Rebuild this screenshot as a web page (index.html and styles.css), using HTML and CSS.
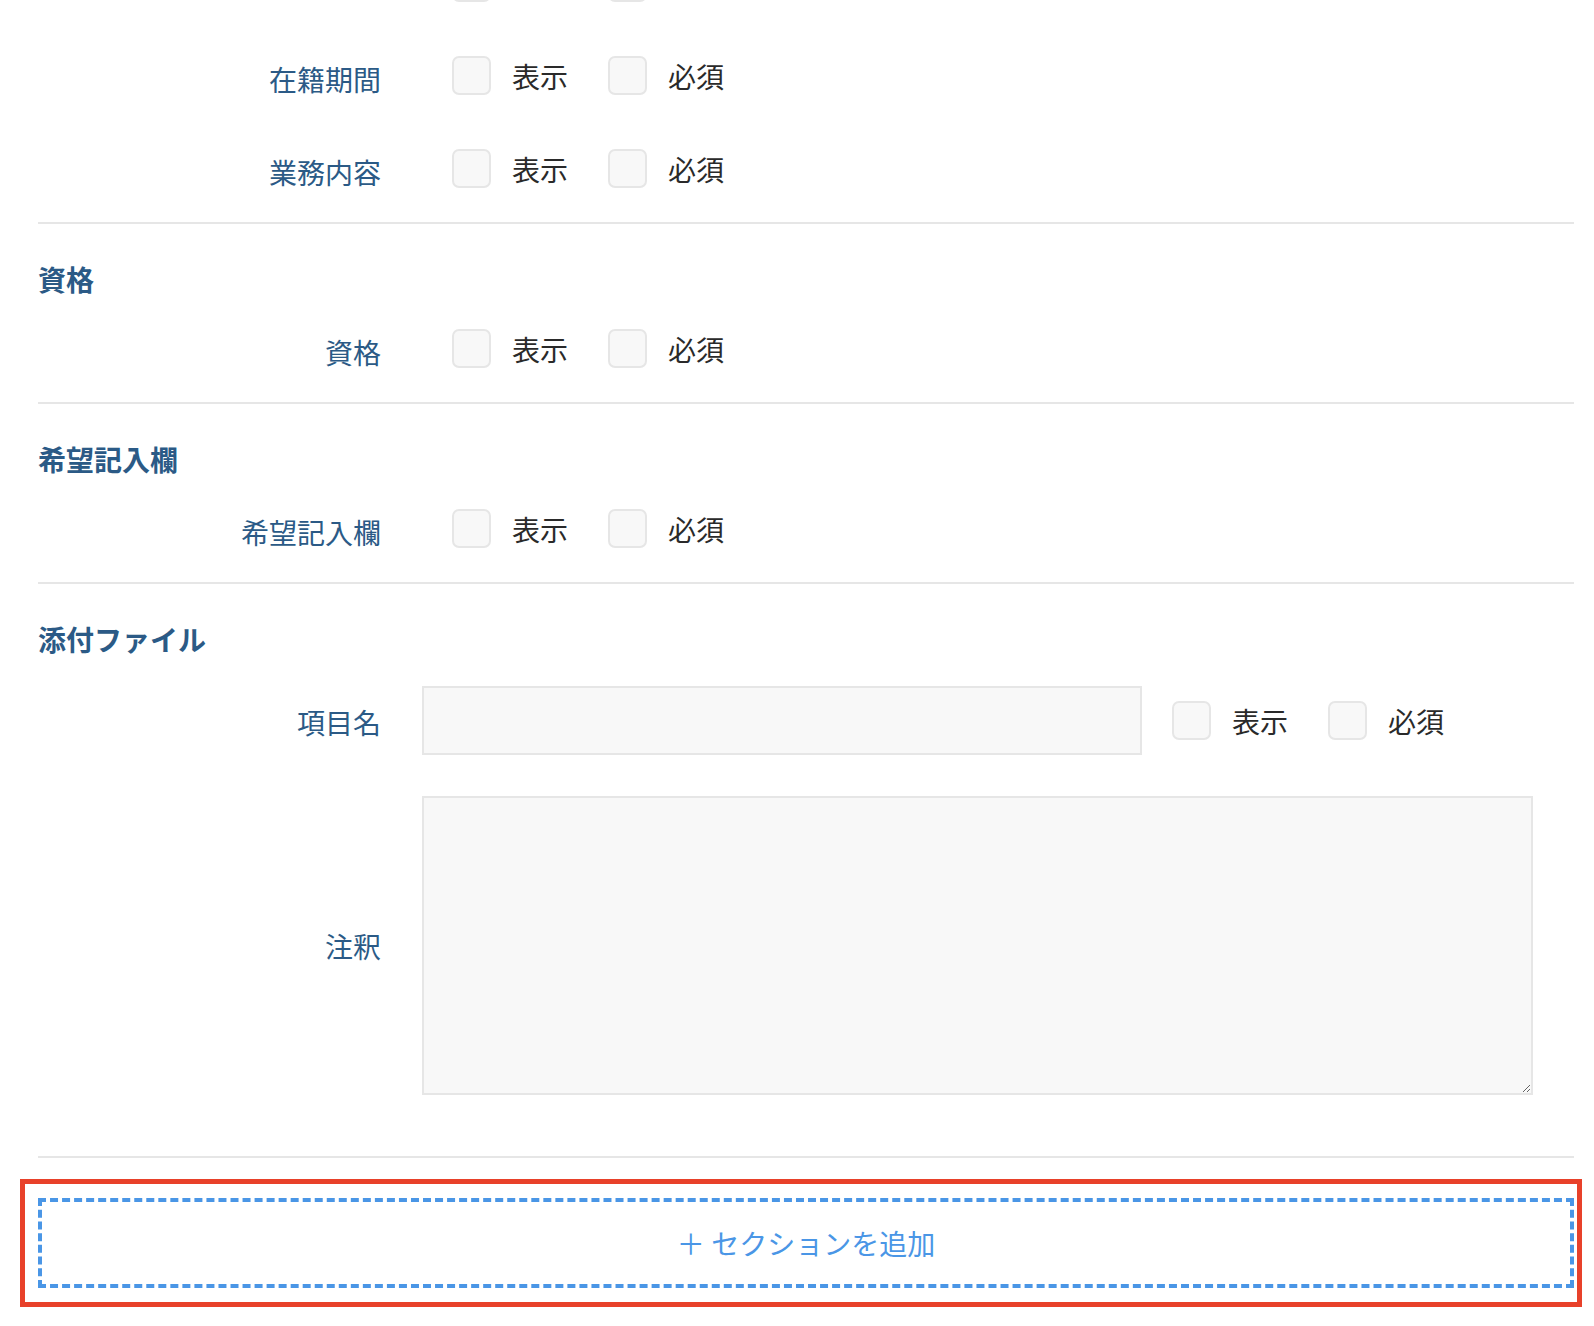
FILE: index.html
```html
<!DOCTYPE html>
<html lang="ja">
<head>
<meta charset="utf-8">
<title>フォーム設定</title>
<link rel="stylesheet" href="styles.css">
</head>
<body>
<div class="page">
  <section class="section section-first">
    <div class="row row-partial">
      <div class="label label-check"></div>
      <div class="checks">
        <span class="check"><span class="box"></span></span>
        <span class="check check-second"><span class="box"></span></span>
      </div>
    </div>
    <div class="row">
      <div class="label label-check">在籍期間</div>
      <div class="checks">
        <label class="check"><span class="box"></span><span class="check-text">表示</span></label>
        <label class="check"><span class="box"></span><span class="check-text">必須</span></label>
      </div>
    </div>
    <div class="row">
      <div class="label label-check">業務内容</div>
      <div class="checks">
        <label class="check"><span class="box"></span><span class="check-text">表示</span></label>
        <label class="check"><span class="box"></span><span class="check-text">必須</span></label>
      </div>
    </div>
  </section>

  <section class="section">
    <h2 class="section-title">資格</h2>
    <div class="row">
      <div class="label label-check">資格</div>
      <div class="checks">
        <label class="check"><span class="box"></span><span class="check-text">表示</span></label>
        <label class="check"><span class="box"></span><span class="check-text">必須</span></label>
      </div>
    </div>
  </section>

  <section class="section">
    <h2 class="section-title">希望記入欄</h2>
    <div class="row">
      <div class="label label-check">希望記入欄</div>
      <div class="checks">
        <label class="check"><span class="box"></span><span class="check-text">表示</span></label>
        <label class="check"><span class="box"></span><span class="check-text">必須</span></label>
      </div>
    </div>
  </section>

  <section class="section section-file">
    <h2 class="section-title">添付ファイル</h2>
    <div class="row row-input">
      <div class="label label-input">項目名</div>
      <input class="text-input" type="text">
      <div class="checks">
        <label class="check"><span class="box"></span><span class="check-text">表示</span></label>
        <label class="check"><span class="box"></span><span class="check-text">必須</span></label>
      </div>
    </div>
    <div class="row row-textarea">
      <div class="label">注釈</div>
      <textarea class="textarea"></textarea>
    </div>
  </section>

  <div class="highlight">
    <button class="add-section" type="button">＋ セクションを追加</button>
  </div>
</div>
</body>
</html>
```

FILE: styles.css
```css
html, body {
  margin: 0;
  padding: 0;
  background: #ffffff;
}

body {
  font-family: "Noto Sans CJK JP", "Noto Sans", sans-serif;
  color: #333333;
  overflow: hidden;
}

.page {
  padding: 0 20px 0 38px;
  margin-top: -40px;
}

.section {
  display: flex;
  flex-direction: column;
  padding: 34px 0 31px;
  border-bottom: 2px solid #e6e6e6;
}

.section-first {
  padding-top: 0;
  gap: 48px;
}

.section-title {
  margin: 0 0 26px;
  font-size: 28px;
  line-height: 42px;
  font-weight: 700;
  color: #2b5a86;
}

.row {
  display: flex;
  align-items: center;
  height: 45px;
}

.label {
  box-sizing: border-box;
  width: 343px;
  flex: none;
  text-align: right;
  font-size: 28px;
  line-height: 42px;
  color: #2b5a86;
  margin-right: 41px;
}

.label-check {
  padding-top: 8px;
  line-height: 37px;
  height: 45px;
}

.label-input {
  padding-top: 3px;
  line-height: 42px;
  height: 45px;
}

.checks {
  display: flex;
  align-items: center;
  gap: 40px;
  margin-left: 30px;
}

.check {
  display: flex;
  align-items: center;
  gap: 21px;
}

.row-partial .check-second {
  margin-left: 77px;
}

.box {
  width: 35px;
  height: 35px;
  border: 2px solid #e6e6e6;
  border-radius: 7px;
  background: #f8f8f8;
}

.check-text {
  font-size: 28px;
  line-height: 42px;
  color: #2a2a2a;
}

.text-input {
  box-sizing: border-box;
  width: 720px;
  height: 69px;
  margin: 0;
  padding: 0 16px;
  border: 2px solid #e6e6e6;
  border-radius: 0;
  background: #f8f8f8;
  font-family: inherit;
  font-size: 24px;
  outline: none;
}

.row-input {
  height: 69px;
}

.row-textarea {
  height: 299px;
  margin-top: 41px;
}

.textarea {
  box-sizing: border-box;
  width: 1111px;
  height: 299px;
  margin: 0;
  padding: 12px 16px;
  border: 2px solid #e6e6e6;
  border-radius: 0;
  background: #f8f8f8;
  font-family: inherit;
  font-size: 24px;
  outline: none;
  display: block;
}

.section-file {
  padding-bottom: 61px;
}

.highlight {
  margin: 21px -8px 0 -18px;
  padding: 14px 3px 14px 13px;
  border: 5px solid #e8412a;
}

.add-section {
  display: block;
  box-sizing: border-box;
  width: 100%;
  height: 90px;
  margin: 0;
  padding: 0;
  border: 4px dashed #4a96e6;
  border-radius: 0;
  background: #ffffff;
  color: #4a96e6;
  font-family: inherit;
  font-size: 28px;
  line-height: 42px;
  cursor: pointer;
}
```
